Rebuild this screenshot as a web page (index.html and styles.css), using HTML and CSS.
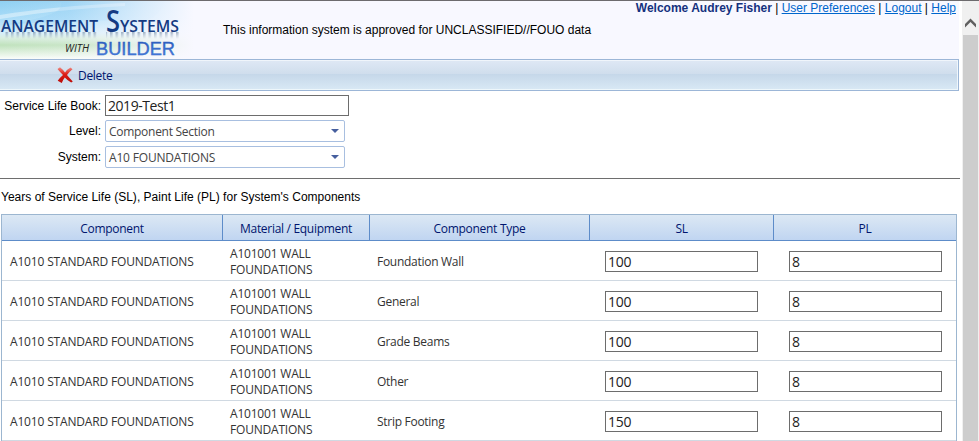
FILE: index.html
```html
<!DOCTYPE html>
<html lang="en">
<head>
<meta charset="utf-8">
<title>Service Life Book</title>
<link rel="stylesheet" href="styles.css">
</head>
<body>
<div class="window">
  <main class="page">
    <header class="banner">
      <svg class="logo" width="194" height="58" viewBox="0 1 194 58" role="img" aria-label="Management Systems with BUILDER">
        <defs>
          <linearGradient id="sky" x1="0" y1="0" x2="0" y2="1">
            <stop offset="0" stop-color="#8fd0f2"/><stop offset=".3" stop-color="#a9dcf8"/><stop offset=".55" stop-color="#d6eefa"/><stop offset=".64" stop-color="#d9eee0"/><stop offset=".76" stop-color="#c0e2bd"/><stop offset="1" stop-color="#fbfdfb"/>
          </linearGradient>
          <linearGradient id="fade"><stop offset="0" stop-color="#f8f8ff" stop-opacity="0"/><stop offset=".35" stop-color="#f8f8ff" stop-opacity=".15"/><stop offset=".75" stop-color="#f8f8ff" stop-opacity=".7"/><stop offset="1" stop-color="#f8f8ff"/></linearGradient>
          <linearGradient id="shade" x1="0" y1="0" x2="0" y2="1"><stop offset="0" stop-color="#6b829b" stop-opacity=".6"/><stop offset="1" stop-color="#8a9bb0" stop-opacity="0"/></linearGradient>
          <pattern id="stems" width="5.500" height="8" patternUnits="userSpaceOnUse"><rect width="2.500" height="8" fill="#fff"/></pattern>
          <mask id="letters"><rect x="3" y="32" width="176" height="8" fill="url(#stems)"/></mask>
          <filter id="soft"><feGaussianBlur stdDeviation=".5"/></filter>
          <linearGradient id="blue" x1="0" y1="0" x2="0" y2="1"><stop offset="0" stop-color="#2453b5"/><stop offset="1" stop-color="#4c86e6"/></linearGradient>
        </defs>
        <rect y="1" width="194" height="58" fill="url(#sky)"/>
        <path d="M0 15Q55 6 125 3V6Q60 9 0 19Z" fill="#fff" opacity=".4"/>
        <path d="M60 1H165Q160 16 145 21Q90 19 0 25Q70 16 60 1Z" fill="#83c8f2" opacity=".25"/>
        <rect y="1" width="194" height="58" fill="url(#fade)"/>
        <g filter="url(#soft)"><path d="M3 32h94v7H3zM106 32h73v7h-73z" fill="url(#shade)" mask="url(#letters)"/></g>
        <g class="logo-name">
          <text x="1" y="32" font-size="17" textLength="97" lengthAdjust="spacingAndGlyphs">ANAGEMENT</text>
          <text x="106" y="32" font-size="30" textLength="14" lengthAdjust="spacingAndGlyphs">S</text>
          <text x="120" y="32" font-size="17" textLength="59" lengthAdjust="spacingAndGlyphs">YSTEMS</text>
        </g>
        <text class="logo-with" x="65" y="52" font-size="11" textLength="24" lengthAdjust="spacingAndGlyphs">WITH</text>
        <text class="logo-builder" x="96" y="54.5" font-size="17.5" textLength="79" lengthAdjust="spacingAndGlyphs" fill="url(#blue)">BUILDER</text>
      </svg>
      <p class="notice">This information system is approved for UNCLASSIFIED//FOUO data</p>
      <nav class="account"><b>Welcome Audrey Fisher</b> | <a href="#">User Preferences</a> | <a href="#">Logout</a> | <a href="#">Help</a></nav>
    </header>
    <div class="toolbar">
      <button class="delete" type="button">
        <svg width="16" height="16" viewBox="0 0 16 16"><defs><linearGradient id="red" x1="0" y1="0" x2="0" y2="1"><stop offset="0" stop-color="#ee8b83"/><stop offset=".45" stop-color="#dd1c16"/><stop offset="1" stop-color="#b80c08"/></linearGradient></defs><path d="M.5 2 3 .2Q6 2.500 8 5.500Q10.500 2 13.500 .5L15.500 2.200Q12 5 10 8Q12.500 11 15.800 14.400L14.200 15.500Q10.500 13.500 7.800 10.500Q5.800 13 4.800 16L.7 13.800Q3 10.500 6 8Q3 5 .5 2Z" fill="url(#red)"/></svg>
        <span>Delete</span>
      </button>
    </div>
    <form class="filters">
      <label for="book">Service Life Book:</label>
      <input id="book" class="field" value="2019-Test1">
      <span class="label">Level:</span>
      <div class="combo"><span>Component Section</span><i></i></div>
      <span class="label">System:</span>
      <div class="combo combo-system"><span>A10 FOUNDATIONS</span><i></i></div>
    </form>
    <p class="caption">Years of Service Life (SL), Paint Life (PL) for System's Components</p>
    <table class="grid">
      <colgroup><col class="c1"><col class="c2"><col class="c3"><col class="c4"><col class="c5"></colgroup>
      <thead><tr><th>Component</th><th>Material / Equipment</th><th>Component Type</th><th>SL</th><th>PL</th></tr></thead>
      <tbody>
        <tr><td class="comp">A1010 STANDARD FOUNDATIONS</td><td class="mat">A101001 WALL<br>FOUNDATIONS</td><td>Foundation Wall</td><td class="num"><input class="field" value="100"></td><td class="num"><input class="field" value="8"></td></tr>
        <tr><td class="comp">A1010 STANDARD FOUNDATIONS</td><td class="mat">A101001 WALL<br>FOUNDATIONS</td><td>General</td><td class="num"><input class="field" value="100"></td><td class="num"><input class="field" value="8"></td></tr>
        <tr><td class="comp">A1010 STANDARD FOUNDATIONS</td><td class="mat">A101001 WALL<br>FOUNDATIONS</td><td>Grade Beams</td><td class="num"><input class="field" value="100"></td><td class="num"><input class="field" value="8"></td></tr>
        <tr><td class="comp">A1010 STANDARD FOUNDATIONS</td><td class="mat">A101001 WALL<br>FOUNDATIONS</td><td>Other</td><td class="num"><input class="field" value="100"></td><td class="num"><input class="field" value="8"></td></tr>
        <tr><td class="comp">A1010 STANDARD FOUNDATIONS</td><td class="mat">A101001 WALL<br>FOUNDATIONS</td><td>Strip Footing</td><td class="num"><input class="field" value="150"></td><td class="num"><input class="field" value="8"></td></tr>
      </tbody>
    </table>
  </main>
  <aside class="scrollbar">
    <svg width="17" height="34" viewBox="0 0 17 34"><path d="M3 23 8.500 17.500 14 23V26.500L8.500 21 3 26.500Z" fill="#606060"/></svg>
    <div class="thumb"></div>
  </aside>
</div>
</body>
</html>
```
FILE: styles.css
```css
* { box-sizing: border-box; }
html, body { margin: 0; height: 441px; overflow: hidden; }
body { background: #fff; color: #000; font: 12px/16px "Liberation Sans", Arial, sans-serif; }
p { margin: 0; }

.window { display: flex; height: 441px; overflow: hidden; border-top: 1px solid #6d6b6e; }
.page { width: 962px; flex: none; }

.banner { display: flex; width: 959px; height: 58px; background: #f8f8ff; }
.logo { flex: none; display: block; }
.logo-name { font-family: "Open Sans", sans-serif; font-weight: 600; fill: #143a82; }
.logo-with { font-family: "Open Sans", sans-serif; font-style: italic; font-weight: 500; fill: #222; }
.logo-builder { font-family: "Liberation Sans", Arial, sans-serif; stroke: #3466c4; stroke-width: .4; }
.notice { padding: 21px 0 0 29px; white-space: nowrap; }
.account { margin-left: auto; padding-right: 3px; line-height: 14px; white-space: nowrap; }
.account b { color: #15317e; }
.account a { color: #0066cc; text-decoration: underline; }

.toolbar { width: 959px; height: 32px; border: 1px solid #9cb6d7; border-left: 0; box-shadow: inset -1px 0 #eff6fb, inset 0 1px #f0f5fb, inset 0 -1px #eef7fb; background: linear-gradient(#dfe8f5 0, #d0deed 45%, #c5d7e9 46%, #d9e9f5 100%); }
.delete { display: flex; align-items: center; gap: 5px; height: 30px; margin: 0 0 0 57px; padding: 0; border: 0; background: none; color: #00156e; font: 12px/16px "Open Sans", "Noto Sans", sans-serif; letter-spacing: -.3px; }
.delete span { padding-top: 2px; }

.filters { display: grid; grid-template-columns: 101px 244px; grid-template-rows: 21px 22px 22px; column-gap: 4px; row-gap: 4px; width: 960px; height: 88px; padding-top: 4px; border-bottom: 1px solid #6e6e6e; }
.filters label, .filters .label { text-align: right; line-height: 22px; white-space: nowrap; }
.field { display: block; width: 100%; height: 21px; margin: 0; padding: 0 2px 1px; border: 1px solid #6d6d6d; border-radius: 0; background: #fff; color: #222; font: 14px/18px "Open Sans", "Noto Sans", sans-serif; letter-spacing: -.45px; }
.combo { display: flex; align-items: center; justify-content: space-between; width: 240px; height: 22px; padding: 2px 5px 0 3px; border: 1px solid #a8bfe0; border-radius: 2px; color: #444; font: 12px/18px "Open Sans", "Noto Sans", sans-serif; letter-spacing: -.28px; }
.combo i { width: 8px; height: 4px; margin-bottom: 2px; background: #465f9e; clip-path: polygon(0 0, 100% 0, 50% 100%); }
.combo-system { letter-spacing: -.18px; }

.caption { height: 35px; padding: 10px 0 0 1px; white-space: nowrap; letter-spacing: .01px; }

.grid { width: 956px; margin-left: 1px; table-layout: fixed; border-collapse: separate; border-spacing: 0; border: 1px solid #9cb6d0; font: 12px/16px "Open Sans", "Noto Sans", sans-serif; color: #333; }
.c1 { width: 221px; } .c2 { width: 147px; } .c3 { width: 220px; } .c4 { width: 184px; }
.grid th { height: 26px; padding: 2px 0 0; border-right: 1px solid #5d8cc9; border-bottom: 1px solid #5d8cc9; background: linear-gradient(#dce8f4, #c0d5f1); color: #00156e; font-weight: 400; letter-spacing: -.3px; }
.grid th:last-child { border-right: 0; }
.grid td { height: 40px; padding: 3px 0 0 7px; border-bottom: 1px solid #d0d9e2; white-space: nowrap; letter-spacing: -.28px; }
.grid td.comp { padding-left: 8px; letter-spacing: -.17px; }
.grid td.mat { letter-spacing: -.2px; }
.grid td.num { padding: 2px 0 0 15px; }
.grid .field { width: 153px; letter-spacing: -.3px; }

.scrollbar { width: 17px; flex: none; background: #f0f0f0; }
.scrollbar svg { display: block; }
.thumb { width: 15px; height: 406px; margin-left: 1px; background: #cdcdcd; }
```
